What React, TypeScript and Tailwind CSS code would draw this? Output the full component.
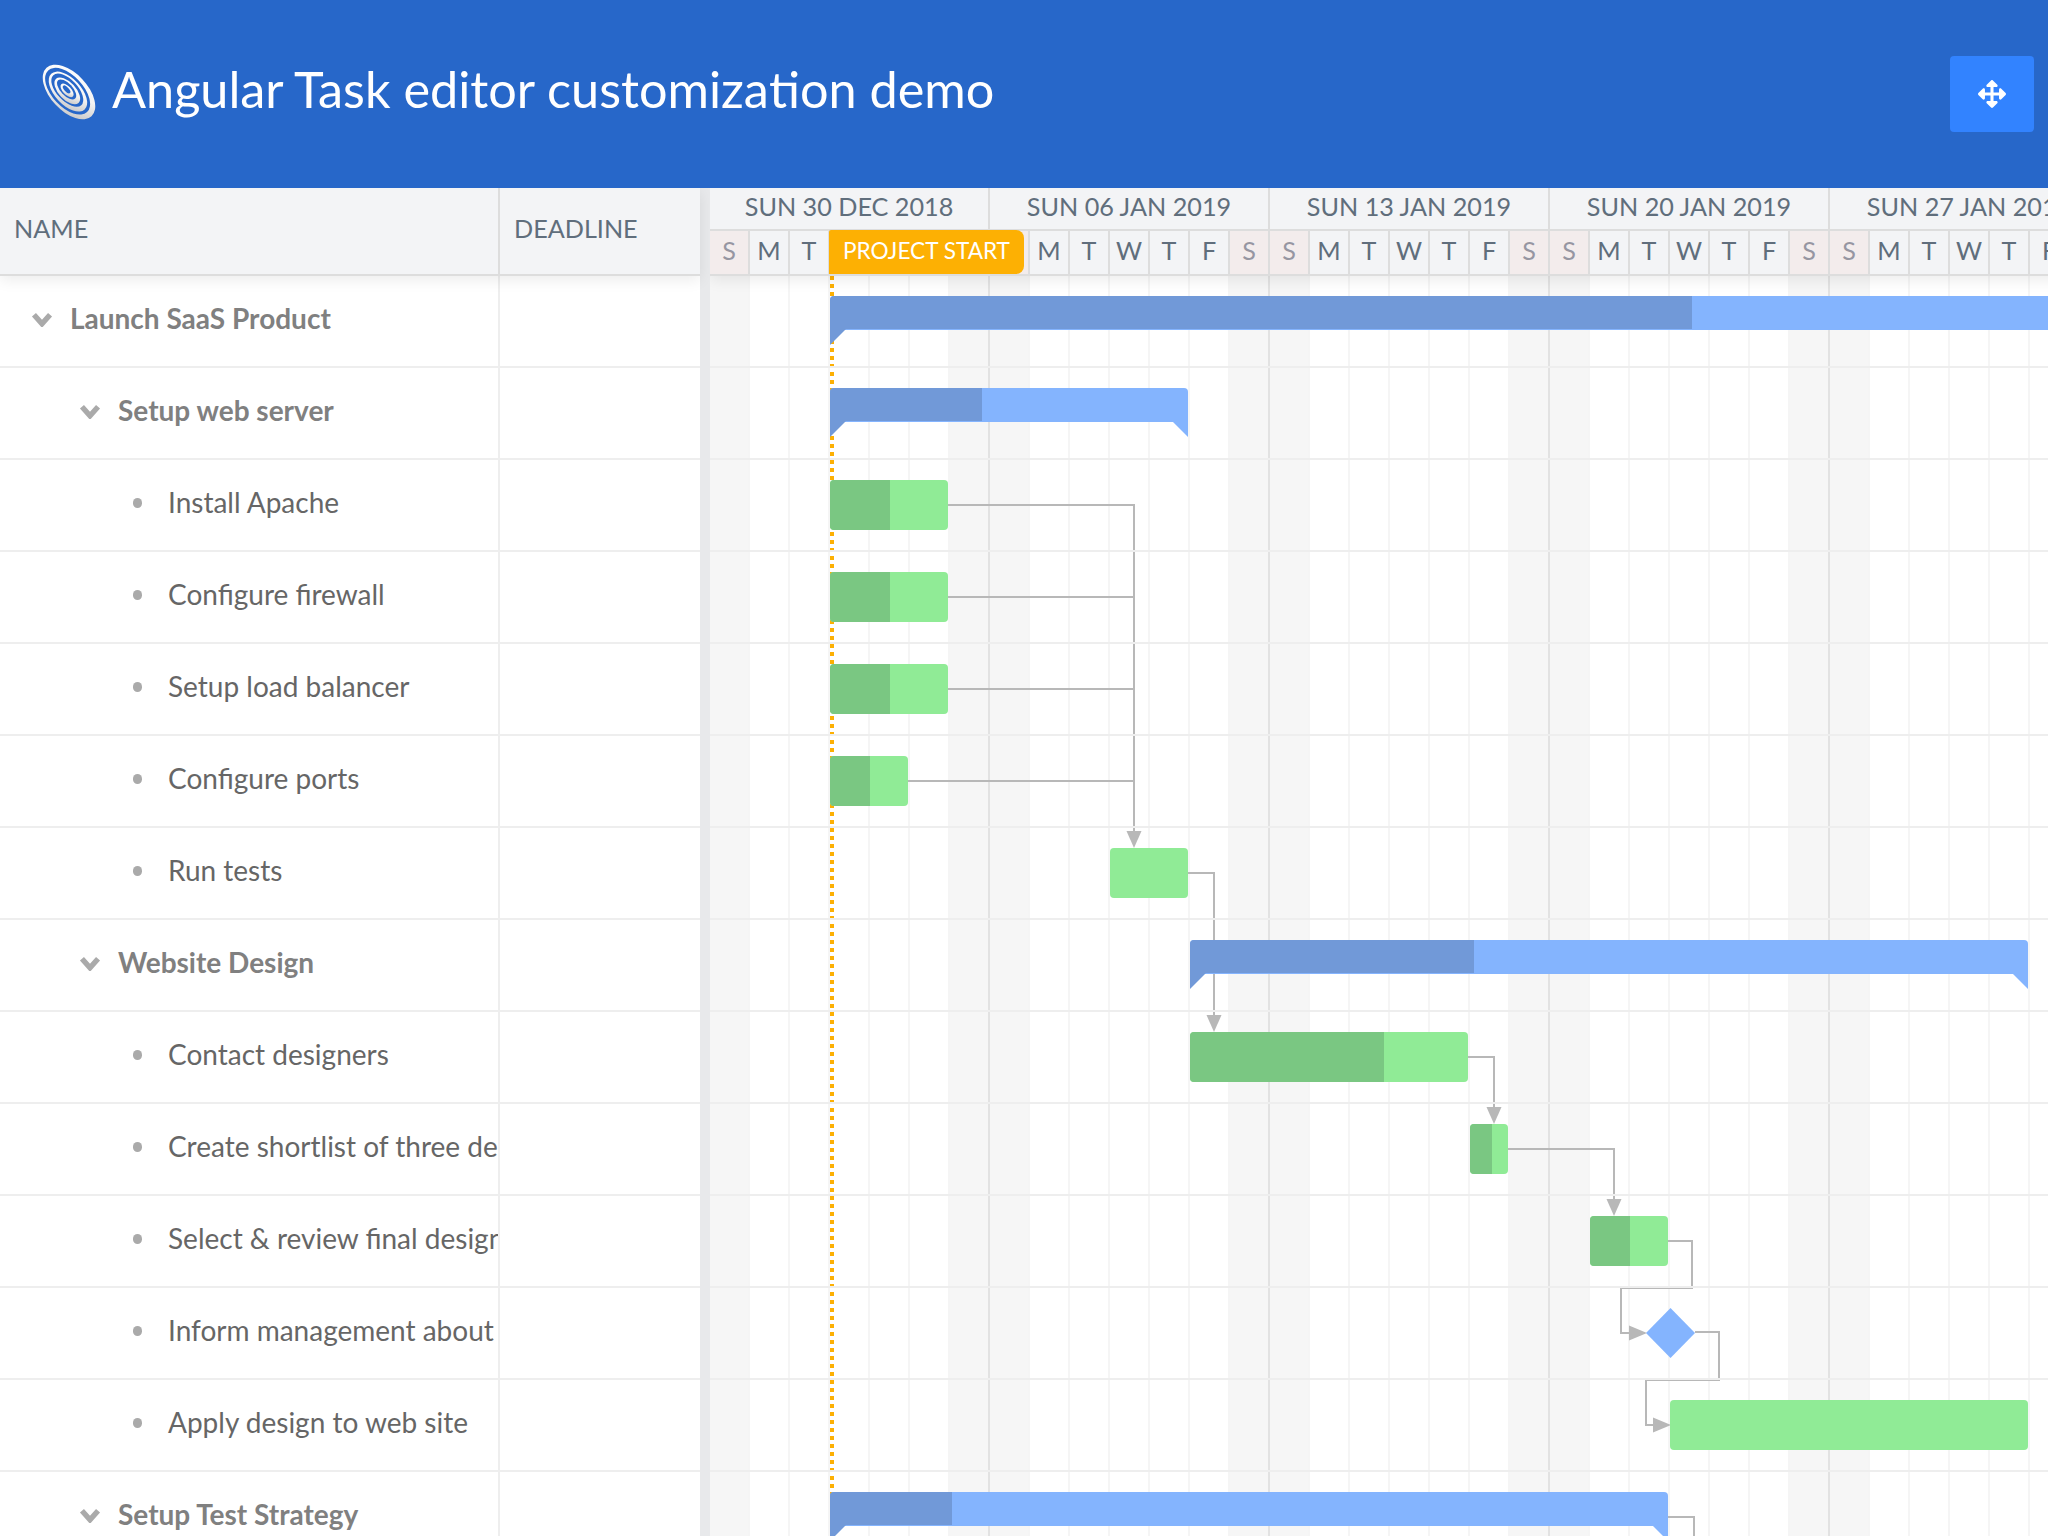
import { FaArrowsAlt } from 'react-icons/fa'

const ORIGIN = 710

const weeks = ['SUN 30 DEC 2018', 'SUN 06 JAN 2019', 'SUN 13 JAN 2019', 'SUN 20 JAN 2019', 'SUN 27 JAN 2019']
const dayNames = ['S', 'M', 'T', 'W', 'T', 'F', 'S']
const days = Array.from({ length: 35 }, (_, i) => dayNames[i % 7])

type Row = {
  name: string
  level: 0 | 1 | 2
  bar?: { kind: 'parent' | 'task' | 'milestone'; from: number; to: number; done?: number }
}

const rows: Row[] = [
  { name: 'Launch SaaS Product', level: 0, bar: { kind: 'parent', from: 830, to: 2120, done: 1692 } },
  { name: 'Setup web server', level: 1, bar: { kind: 'parent', from: 830, to: 1188, done: 982 } },
  { name: 'Install Apache', level: 2, bar: { kind: 'task', from: 830, to: 948, done: 890 } },
  { name: 'Configure firewall', level: 2, bar: { kind: 'task', from: 830, to: 948, done: 890 } },
  { name: 'Setup load balancer', level: 2, bar: { kind: 'task', from: 830, to: 948, done: 890 } },
  { name: 'Configure ports', level: 2, bar: { kind: 'task', from: 830, to: 908, done: 870 } },
  { name: 'Run tests', level: 2, bar: { kind: 'task', from: 1110, to: 1188 } },
  { name: 'Website Design', level: 1, bar: { kind: 'parent', from: 1190, to: 2028, done: 1474 } },
  { name: 'Contact designers', level: 2, bar: { kind: 'task', from: 1190, to: 1468, done: 1384 } },
  { name: 'Create shortlist of three designers', level: 2, bar: { kind: 'task', from: 1470, to: 1508, done: 1492 } },
  { name: 'Select & review final designs', level: 2, bar: { kind: 'task', from: 1590, to: 1668, done: 1630 } },
  { name: 'Inform management about decision', level: 2, bar: { kind: 'milestone', from: 1646, to: 1695 } },
  { name: 'Apply design to web site', level: 2, bar: { kind: 'task', from: 1670, to: 2028 } },
  { name: 'Setup Test Strategy', level: 1, bar: { kind: 'parent', from: 830, to: 1668, done: 952 } },
]

// connector polylines, in page coordinates
const links = [
  { d: 'M948 505H1134V834', arrow: 'down', x: 1134, y: 848 },
  { d: 'M948 597H1134' },
  { d: 'M948 689H1134' },
  { d: 'M908 781H1134' },
  { d: 'M1188 873H1214V1018', arrow: 'down', x: 1214, y: 1032 },
  { d: 'M1468 1057H1494V1110', arrow: 'down', x: 1494, y: 1124 },
  { d: 'M1508 1149H1614V1202', arrow: 'down', x: 1614, y: 1216 },
  { d: 'M1668 1241H1692V1288H1621V1333H1632', arrow: 'right', x: 1647, y: 1333 },
  { d: 'M1695 1332H1719V1380H1646V1425H1656', arrow: 'right', x: 1671, y: 1425 },
  { d: 'M1668 1517H1694V1540' },
]

function Logo() {
  return (
    <svg viewBox="0 0 60 60" className="w-[60px] h-[60px] shrink-0">
      <defs>
        <linearGradient id="swirl" x1="0" y1="0" x2="1" y2="1">
          <stop offset="0" stopColor="#ffffff" />
          <stop offset="0.55" stopColor="#f4f4f4" />
          <stop offset="1" stopColor="#b9b9b9" />
        </linearGradient>
      </defs>
      <g transform="rotate(47 30 30)">
        <ellipse cx="30" cy="30" rx="33" ry="18.5" fill="url(#swirl)" />
        <ellipse cx="28.5" cy="30.5" rx="28.5" ry="15.5" fill="#2767c9" />
        <ellipse cx="29" cy="30.5" rx="24.5" ry="13" fill="url(#swirl)" />
        <ellipse cx="27.5" cy="30" rx="20.5" ry="10.5" fill="#2767c9" />
        <ellipse cx="28" cy="30.5" rx="16.5" ry="8.5" fill="url(#swirl)" />
        <ellipse cx="26.5" cy="30" rx="12.5" ry="6" fill="#2767c9" />
        <ellipse cx="27.5" cy="30.3" rx="8.5" ry="4.2" fill="url(#swirl)" />
        <ellipse cx="26.5" cy="30" rx="5" ry="2.2" fill="#2767c9" />
      </g>
    </svg>
  )
}

function Chevron() {
  return (
    <svg viewBox="0 0 20 14" className="w-[22px] h-[15px] mb-[4px] ml-px shrink-0">
      <path d="M2.5 2.5L10 11L17.5 2.5" fill="none" stroke="#aaaaaa" strokeWidth="5" />
    </svg>
  )
}

function Bar({ bar }: { bar: NonNullable<Row['bar']> }) {
  const width = bar.to - bar.from

  if (bar.kind === 'milestone') {
    return (
      <div
        className="absolute top-5 h-[50px] bg-[#84b4fe] [clip-path:polygon(50%_0,100%_50%,50%_100%,0_50%)]"
        style={{ left: bar.from - ORIGIN, width }}
      />
    )
  }

  if (bar.kind === 'task') {
    return (
      <div
        className="absolute top-5 h-[50px] rounded-[4px] overflow-hidden bg-[#90eb96]"
        style={{ left: bar.from - ORIGIN, width }}
      >
        {bar.done && <div className="h-full bg-[#7ac782]" style={{ width: bar.done - bar.from }} />}
      </div>
    )
  }

  return (
    <div className="absolute top-5 h-[50px]" style={{ left: bar.from - ORIGIN, width }}>
      <div className="h-[34px] rounded-t-[4px] overflow-hidden bg-[#84b4fe]">
        {bar.done && <div className="h-[33px] bg-[#7199d8]" style={{ width: bar.done - bar.from }} />}
      </div>
      <div className="absolute left-0 top-[33px] w-4 h-4 bg-[#7199d8] [clip-path:polygon(0_0,100%_0,0_100%)]" />
      <div className="absolute right-0 top-[33px] w-4 h-4 bg-[#84b4fe] [clip-path:polygon(0_0,100%_0,100%_100%)]" />
    </div>
  )
}

function NameCell({ row }: { row: Row }) {
  if (row.level === 2) {
    return (
      <div className="flex items-center pl-[133px] w-[500px] h-full border-r-2 border-[#eeeeee] overflow-hidden whitespace-nowrap">
        <span className="w-[9px] h-[10px] mb-[4px] rounded-full bg-[#aaaaaa] shrink-0" />
        <span className="ml-[26px] pb-[7px] text-[#666666]">{row.name}</span>
      </div>
    )
  }
  return (
    <div
      className={`flex items-center w-[500px] h-full border-r-2 border-[#eeeeee] overflow-hidden whitespace-nowrap ${
        row.level === 0 ? 'pl-[30px]' : 'pl-[78px]'
      }`}
    >
      <Chevron />
      <span className="ml-[17px] pb-[7px] font-bold text-[#808080]">{row.name}</span>
    </div>
  )
}

export default function App() {
  return (
    <div className="w-[2048px] h-[1536px] flex flex-col overflow-hidden bg-white font-['Lato',sans-serif]">
      {/* ── Titolo ── */}
      <header className="h-[188px] shrink-0 flex items-center pl-[39px] pr-[14px] pb-[4px] bg-[#2767c9]">
        <Logo />
        <h1 className="ml-[13px] pb-[6px] text-[50.4px] text-white font-normal">
          Angular Task editor customiza
          <span className="[font-variant-ligatures:discretionary-ligatures]">ti</span>
          on demo
        </h1>
        <button className="ml-auto w-[84px] h-[76px] mt-[4px] flex items-center justify-center rounded-[4px] bg-[#3283ff] text-white">
          <FaArrowsAlt className="w-[28px] h-[28px]" />
        </button>
      </header>

      <div className="relative flex-1 flex overflow-hidden">
        {/* ── Griglia sinistra ── */}
        <div className="w-[700px] shrink-0 flex flex-col">
          <div className="relative z-10 h-[88px] shrink-0 flex bg-[#f3f4f6] border-b-2 border-[#dddddd] shadow-[0_4px_14px_rgba(0,0,0,0.08)] text-[25.2px] text-[#606e7c]">
            <div className="w-[500px] flex items-center pl-[14px] pb-[4px] border-r-2 border-[#dddddd]">NAME</div>
            <div className="flex-1 flex items-center pl-[14px] pb-[4px]">DEADLINE</div>
          </div>
          {rows.map((row) => (
            <div key={row.name} className="h-[92px] shrink-0 border-b-2 border-[#eeeeee] text-[28px]">
              <NameCell row={row} />
            </div>
          ))}
        </div>

        <div className="w-[10px] shrink-0 bg-[#e8e9eb]" />

        {/* ── Gantt ── */}
        <div className="flex-1 flex flex-col overflow-hidden">
          <div className="relative z-10 h-[88px] shrink-0 bg-[#f3f4f6] border-b-2 border-[#dddddd] shadow-[0_4px_14px_rgba(0,0,0,0.08)] text-[#606e7c] w-[1400px]">
            <div className="flex h-[43px] border-b-2 border-[#dddddd]">
              {weeks.map((week) => (
                <div
                  key={week}
                  className="w-[280px] shrink-0 flex items-center justify-center pb-[4px] border-r-2 border-[#dddddd] text-[25.2px] whitespace-nowrap"
                >
                  {week}
                </div>
              ))}
            </div>
            <div className="flex h-[43px] text-[25.2px]">
              {days.map((d, i) => {
                const weekend = i % 7 === 0 || i % 7 === 6
                const underPill = i >= 3 && i <= 7
                return (
                  <div
                    key={i}
                    className={`w-[40px] shrink-0 flex items-center justify-center pb-[4px] border-r-2 border-[#dddddd] ${
                      weekend ? 'bg-[#f3ecec] text-[#9696a2]' : ''
                    }`}
                  >
                    {underPill ? '' : d}
                  </div>
                )
              })}
            </div>
            <div className="absolute left-[119px] top-[42px] w-[195px] h-[44px] flex items-center justify-center pb-[2px] rounded-r-[8px] rounded-tl-[2px] bg-[#fdb003] text-white text-[22.6px] whitespace-nowrap">
              PROJECT START
            </div>
          </div>

          <div className="relative flex-1">
            <div className="absolute inset-0 flex">
              {days.map((_, i) => {
                const weekend = i % 7 === 0 || i % 7 === 6
                return (
                  <div
                    key={i}
                    className={`w-[40px] shrink-0 border-r-2 ${i % 7 === 6 ? 'border-[#e2e2e2]' : 'border-[#f5f5f5]'} ${
                      weekend ? 'bg-[#f6f6f6]' : ''
                    }`}
                  />
                )
              })}
            </div>

            {/* linea inizio progetto */}
            <div className="absolute top-0 bottom-0 left-[120px] w-[4px] bg-[repeating-linear-gradient(to_bottom,#fdb003_0,#fdb003_4px,transparent_4px,transparent_8px)]" />

            <svg viewBox="710 276 1338 1260" className="absolute left-0 top-0 w-[1338px] h-[1260px]">
              {links.map((link) => (
                <g key={link.d}>
                  <path d={link.d} fill="none" stroke="#b8b8b8" strokeWidth="2" />
                  {link.arrow === 'down' && (
                    <polygon
                      points={`${link.x! - 7.5},${link.y! - 17} ${link.x! + 7.5},${link.y! - 17} ${link.x!},${link.y!}`}
                      fill="#b8b8b8"
                    />
                  )}
                  {link.arrow === 'right' && (
                    <polygon
                      points={`${link.x! - 18},${link.y! - 7.5} ${link.x! - 18},${link.y! + 7.5} ${link.x!},${link.y!}`}
                      fill="#b8b8b8"
                    />
                  )}
                </g>
              ))}
            </svg>

            {rows.map((row) => (
              <div key={row.name} className="relative h-[92px] border-b-2 border-[#eeeeee]">
                {row.bar && <Bar bar={row.bar} />}
              </div>
            ))}
          </div>
        </div>
      </div>
    </div>
  )
}
